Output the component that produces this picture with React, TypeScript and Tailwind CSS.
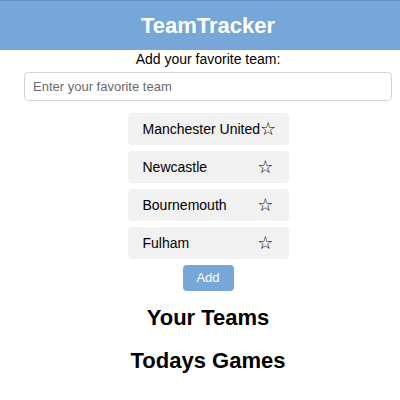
const teams = ["Manchester United", "Newcastle", "Bournemouth", "Fulham"];

const App = () => {
  return (
    <div className="min-h-screen bg-white font-['Liberation_Sans',Arial,sans-serif] text-black">
      <header className="h-[50px] bg-[#77a7d8] border-t border-[#6290c2] flex items-center justify-center pl-[16px]">
        <h1 className="text-[22px] font-bold text-white">TeamTracker</h1>
      </header>
      <main className="flex flex-col items-center pl-[16px]">
        <p className="mt-[1px] text-[14px] leading-[17px]">Add your favorite team:</p>
        <input
          type="text"
          placeholder="Enter your favorite team"
          className="mt-[4px] w-[368px] h-[29px] rounded border border-[#d4d4d4] px-[8px] text-[13px] placeholder:text-[#6b6b6b] outline-none"
        />
        <ul className="mt-[12px] flex flex-col gap-[6px]">
          {teams.map((t) => (
            <li
              key={t}
              className="w-[161px] h-[32px] rounded bg-[#f1f1f1] px-[15px] flex items-center justify-between text-[14px] whitespace-nowrap"
            >
              <span>{t}</span>
              <span className="text-[18px] leading-none font-['DejaVu_Sans',sans-serif]">☆</span>
            </li>
          ))}
        </ul>
        <button className="mt-[6px] w-[51px] h-[26px] rounded bg-[#77a7d8] text-white text-[13px]">
          Add
        </button>
        <h2 className="mt-[10px] text-[22px] font-bold">Your Teams</h2>
        <h2 className="mt-[10px] text-[22px] font-bold">Todays Games</h2>
      </main>
    </div>
  );
};

export default App;
